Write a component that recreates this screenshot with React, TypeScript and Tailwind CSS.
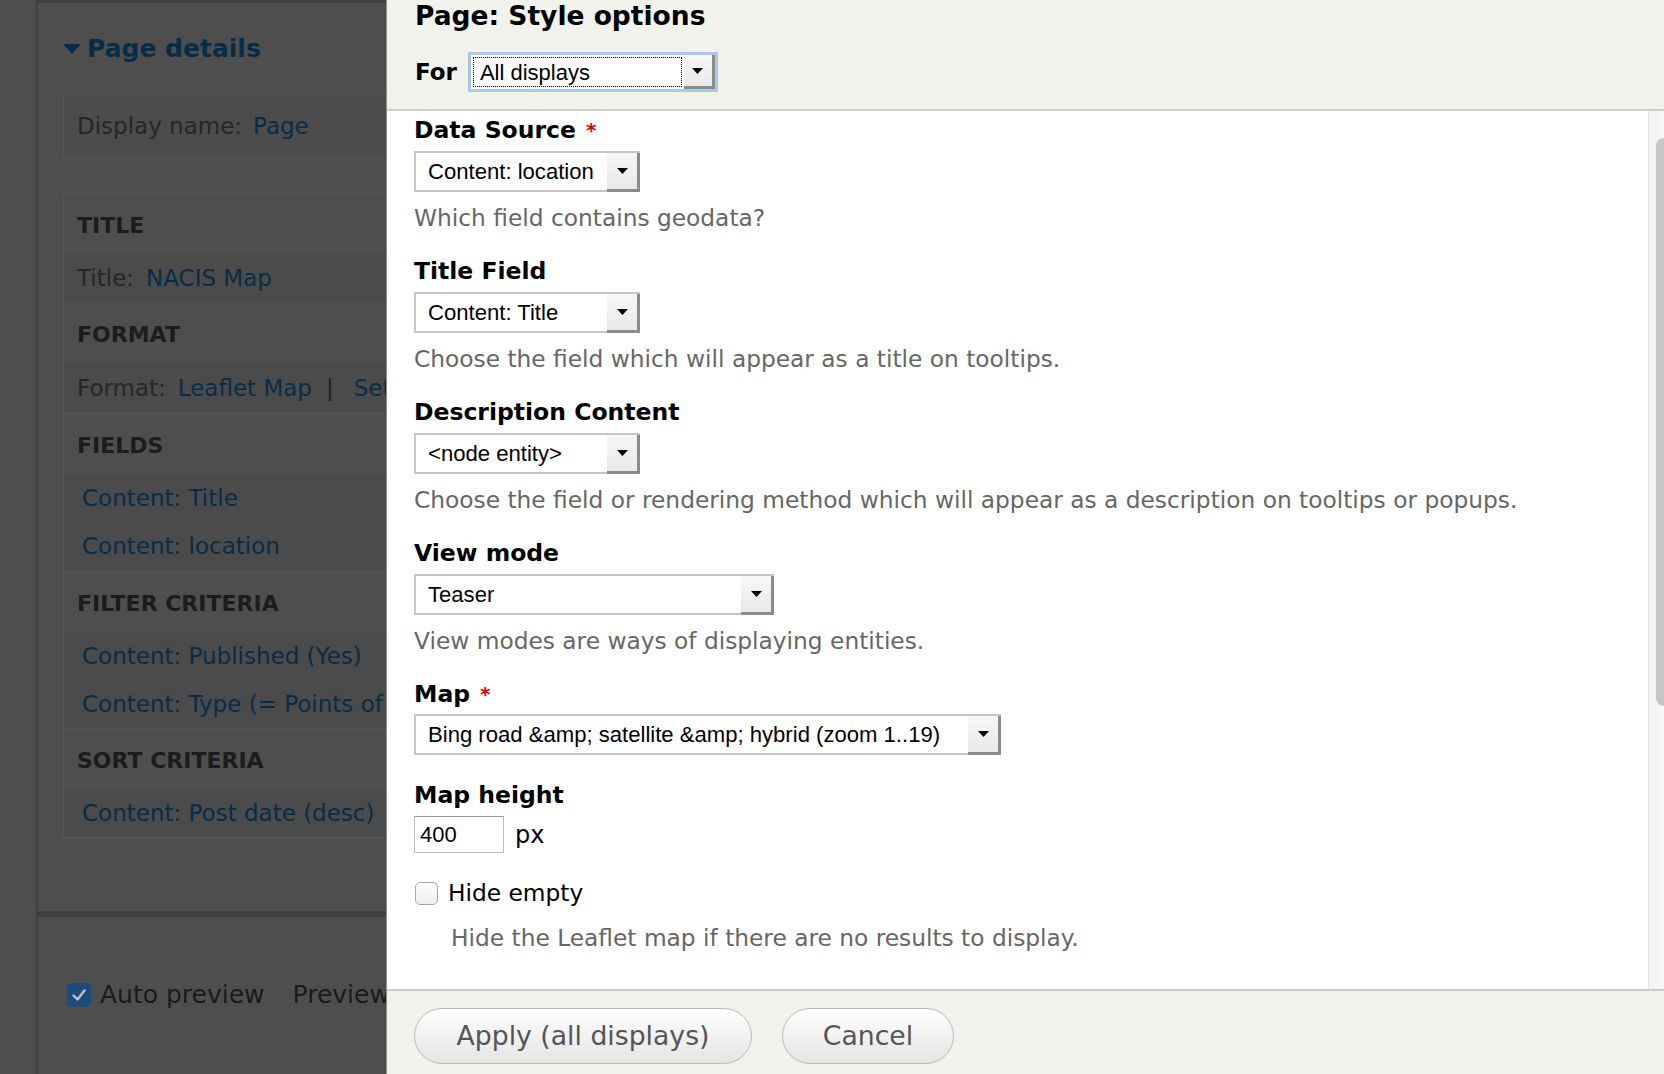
import React from "react";

const sans = "font-['DejaVu_Sans','Noto_Sans',sans-serif]";
const arial = "font-['Liberation_Sans',Arial,sans-serif]";

function Arrow() {
  return (
    <svg width="11" height="6" viewBox="0 0 11 6">
      <path d="M0 0H11L5.5 6Z" fill="#000" />
    </svg>
  );
}

function Select({ value, w }: { value: string; w: string }) {
  return (
    <div className={`flex h-[41px] border-t-2 border-l-2 border-[#c6c6c6] bg-white ${w}`}>
      <div className={`flex-1 flex items-center pl-[12px] border-b-2 border-[#c6c6c6] text-[22.1px] text-black whitespace-nowrap ${arial}`}>
        {value}
      </div>
      <div className="w-[33px] flex items-center justify-center bg-gradient-to-b from-[#f7f7f7] to-[#e9e9e9] border-r-[3px] border-b-[3px] border-[#8b8b8b]">
        <Arrow />
      </div>
    </div>
  );
}

function Label({ text, required }: { text: string; required?: boolean }) {
  return (
    <div className="flex items-center h-[28px] leading-[28px] text-[23.5px] font-bold text-black whitespace-nowrap">
      <span>{text}</span>
      {required && <span className="ml-[10px] text-[20px] leading-[20px] text-[#e60000]">*</span>}
    </div>
  );
}

function Field({
  label,
  required,
  select,
  desc,
}: {
  label: string;
  required?: boolean;
  select: React.ReactNode;
  desc: string;
}) {
  return (
    <div className="mb-[25px]">
      <Label text={label} required={required} />
      <div className="mt-[7px]">{select}</div>
      <div className="mt-[12px] leading-[28px] text-[23.3px] text-[#666666]">{desc}</div>
    </div>
  );
}

function Section({ title, border, children }: { title: string; border?: boolean; children: React.ReactNode }) {
  return (
    <div className={border ? "border-t border-[#545454]" : ""}>
      <div className="h-[60px] pt-[18px] pl-[13px] leading-[28px] text-[22px] font-bold text-[#1c1c1c] bg-[#4e4e4e]">
        {title}
      </div>
      {children}
    </div>
  );
}

function Row({ indent, h, children }: { indent?: boolean; h: string; children: React.ReactNode }) {
  return (
    <div className={`${h} flex items-center whitespace-nowrap ${indent ? "pl-[18px]" : "pl-[13px]"}`}>{children}</div>
  );
}

function LeftPanel() {
  const link = "text-[#072c48]";
  return (
    <div className={`w-[386px] shrink-0 h-full bg-[#4e4e4e] overflow-hidden flex ${sans}`}>
      <div className="w-[36px] shrink-0" />
      <div className="w-[2px] shrink-0 bg-[#3f3f3f]" />
      <div className="w-[800px] shrink-0 flex flex-col">
        <div className="h-[3px] bg-[#424242]" />
        <div className={`mt-[31px] h-[30px] pl-[25px] flex items-center gap-[6px] text-[25px] font-bold ${link}`}>
          <svg width="18" height="10" viewBox="0 0 18 10">
            <path d="M0 0H18L9 10Z" fill="#072c48" />
          </svg>
          <span>Page details</span>
        </div>
        <div className="mt-[30px] ml-[25px] h-[65px] border border-[#565656] bg-[#4c4c4c] flex items-center pl-[13px] text-[23px] whitespace-nowrap">
          <span className="text-[#262626]">Display name:</span>
          <span className={`ml-[11px] ${link}`}>Page</span>
        </div>
        <div className="mt-[34px] ml-[25px] border border-[#565656] bg-[#4b4b4b] text-[23px]">
          <Section title="TITLE">
            <Row h="h-[48px]">
              <span className="text-[#262626]">Title:</span>
              <span className={`ml-[12px] ${link}`}>NACIS Map</span>
            </Row>
          </Section>
          <Section title="FORMAT" border>
            <Row h="h-[50px]">
              <span className="text-[#262626]">Format:</span>
              <span className={`ml-[12px] ${link}`}>Leaflet Map</span>
              <span className="ml-[14px] text-[#1e1e1e]">|</span>
              <span className={`ml-[20px] ${link}`}>Settings</span>
            </Row>
          </Section>
          <Section title="FIELDS" border>
            <Row indent h="h-[48px]">
              <span className={link}>Content: Title</span>
            </Row>
            <Row indent h="h-[49px]">
              <span className={link}>Content: location</span>
            </Row>
          </Section>
          <Section title="FILTER CRITERIA" border>
            <Row indent h="h-[48px]">
              <span className={link}>Content: Published (Yes)</span>
            </Row>
            <Row indent h="h-[48px]">
              <span className={link}>Content: Type (= Points of Interest)</span>
            </Row>
          </Section>
          <Section title="SORT CRITERIA" border>
            <Row indent h="h-[48px]">
              <span className={link}>Content: Post date (desc)</span>
            </Row>
          </Section>
        </div>
        <div className="mt-[73px] h-[6px] bg-[#404040]" />
        <div className="mt-[63px] h-[30px] pl-[29px] flex items-center text-[25px] text-[#1a1a1a] whitespace-nowrap">
          <div className="w-[24px] h-[24px] rounded-[4px] bg-[#1e4b7b] flex items-center justify-center">
            <svg width="16" height="14" viewBox="0 0 16 14">
              <path d="M2.5 7.5L6.5 11.5L13.5 2.5" stroke="#b7c3cf" strokeWidth="2.4" fill="none" strokeLinecap="round" strokeLinejoin="round" />
            </svg>
          </div>
          <span className="ml-[9px]">Auto preview</span>
          <span className="ml-[28px]">Preview with contextual filters:</span>
        </div>
      </div>
    </div>
  );
}

function Modal() {
  return (
    <div className={`flex-1 min-w-0 flex flex-col border-l border-[#8e8e8e] bg-white ${sans}`}>
      <div className="h-[111px] shrink-0 bg-[#f2f2ed] border-b-2 border-[#cdcdcd] pl-[28px]">
        <div className="h-[32px] leading-[32px] text-[26.5px] font-bold text-black">Page: Style options</div>
        <div className="mt-[20px] h-[40px] flex items-center">
          <span className="text-[23px] font-bold text-black">For</span>
          <div className="ml-[11px] w-[250px] h-[40px] border-[3px] border-[#a9c8ea] flex bg-white">
            <div className="flex-1 p-[2px]">
              <div className={`h-full border border-dotted border-black flex items-center pl-[6px] text-[22px] text-black ${arial}`}>
                All displays
              </div>
            </div>
            <div className="w-[31px] flex items-center justify-center bg-gradient-to-b from-[#f7f7f7] to-[#e9e9e9] border-r-[3px] border-b-[3px] border-[#8b8b8b]">
              <Arrow />
            </div>
          </div>
        </div>
      </div>
      <div className="flex-1 min-h-0 flex">
        <div className="flex-1 pl-[27px] pt-[5px]">
          <Field
            label="Data Source"
            required
            select={<Select value="Content: location" w="w-[226px]" />}
            desc="Which field contains geodata?"
          />
          <Field
            label="Title Field"
            select={<Select value="Content: Title" w="w-[226px]" />}
            desc="Choose the field which will appear as a title on tooltips."
          />
          <Field
            label="Description Content"
            select={<Select value="<node entity>" w="w-[226px]" />}
            desc="Choose the field or rendering method which will appear as a description on tooltips or popups."
          />
          <Field
            label="View mode"
            select={<Select value="Teaser" w="w-[360px]" />}
            desc="View modes are ways of displaying entities."
          />
          <div className="mb-[26px]">
            <Label text="Map" required />
            <div className="mt-[6px]">
              <Select value={"Bing road &amp; satellite &amp; hybrid (zoom 1..19)"} w="w-[587px]" />
            </div>
          </div>
          <Label text="Map height" />
          <div className="mt-[7px] flex items-center">
            <div className={`w-[90px] h-[37px] border border-[#bdbdbd] border-t-[#999999] flex items-center pl-[5px] text-[22px] text-black ${arial}`}>
              400
            </div>
            <span className="ml-[11px] text-[24px] text-black">px</span>
          </div>
          <div className="mt-[29px] h-[23px] flex items-center">
            <div className="ml-[1px] w-[23px] h-[23px] rounded-[5px] border border-[#a9a9a9] bg-gradient-to-b from-white to-[#eeeeee]" />
            <span className="ml-[10px] text-[23.3px] text-black">Hide empty</span>
          </div>
          <div className="mt-[19px] pl-[37px] leading-[28px] text-[23.3px] text-[#666666]">
            Hide the Leaflet map if there are no results to display.
          </div>
        </div>
        <div className="w-[16px] shrink-0 border-l border-[#e3e3e3] bg-gradient-to-r from-[#f3f3f3] to-[#f8f8f8]">
          <div className="mt-[27px] ml-[7px] h-[568px] rounded-l-[8px] bg-[#c6c6c6]" />
        </div>
      </div>
      <div className="h-[85px] shrink-0 border-t-2 border-[#cdcdcd] bg-[#f2f2ed] pl-[27px] pt-[17px] flex items-start gap-[30px]">
        <div className="w-[338px] h-[56px] rounded-full border border-[#b9b9b9] bg-gradient-to-b from-white to-[#e4e4e4] flex items-center justify-center text-[26.7px] text-[#555555]">
          Apply (all displays)
        </div>
        <div className="w-[172px] h-[56px] rounded-full border border-[#b9b9b9] bg-gradient-to-b from-white to-[#e4e4e4] flex items-center justify-center text-[26.7px] text-[#555555]">
          Cancel
        </div>
      </div>
    </div>
  );
}

export default function App() {
  return (
    <div className="w-[1664px] h-[1074px] flex overflow-hidden">
      <LeftPanel />
      <Modal />
    </div>
  );
}
